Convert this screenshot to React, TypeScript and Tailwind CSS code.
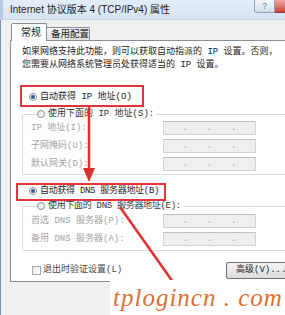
import React from "react";

const body = { fontFamily: '"Liberation Mono", "Noto Sans CJK SC", monospace' };
const ui = { fontFamily: '"Liberation Sans", "Noto Sans CJK SC", sans-serif' };

function Radio({ on }: { on?: boolean }) {
  return (
    <span className="w-[8px] h-[8px] rounded-full border border-[#8e8f8f] bg-gradient-to-br from-[#e6e6e6] to-white flex items-center justify-center shrink-0">
      {on && <span className="w-[4px] h-[4px] rounded-full bg-[#2f5f95]" />}
    </span>
  );
}

function IpBox() {
  return (
    <div className="w-[93px] h-[14px] bg-[#efefef] border border-[#d2d2d2] border-t-[#bdbdbd] flex items-center text-[#9a9a9a] text-[9px] leading-none">
      <span className="flex-1" />
      <span>.</span>
      <span className="flex-1" />
      <span>.</span>
      <span className="flex-1" />
      <span>.</span>
      <span className="flex-1" />
    </div>
  );
}

function FieldRow({ label }: { label: string }) {
  return (
    <div className="flex items-center h-[14px]">
      <span className="w-[132px] text-[#a3a3a3]">{label}</span>
      <IpBox />
    </div>
  );
}

export default function App() {
  return (
    <div className="relative w-[285px] h-[315px] overflow-hidden flex flex-col bg-[#f0f0f0]" style={body}>
      {/* title bar */}
      <div className="h-[20px] shrink-0 flex bg-gradient-to-b from-[#e3edf8] to-[#d6e4f3] border-b border-[#c7d3e0]">
        <div className="w-[3px] bg-[#b4cbe6]" />
        <span className="pl-[7px] pt-[3px] text-[10px] leading-[14px] text-[#1e1e1e]" style={ui}>
          Internet 协议版本 4 (TCP/IPv4) 属性
        </span>
        <div className="ml-auto flex self-start">
          <div className="w-[21px] h-[13px] rounded-bl-[3px] border border-t-0 border-[#8fa3ba] bg-gradient-to-b from-[#f4f7fb] to-[#d3dfec] flex items-center justify-center text-[9px] leading-none text-[#6d7f96]" style={ui}>
            ?
          </div>
          <div className="w-[10px] h-[13px] bg-gradient-to-b from-[#e8a8a0] to-[#c9453a] border-b border-[#8a3b35]" />
        </div>
      </div>

      <div className="flex flex-1">
        <div className="w-[4px] bg-[#b4cbe6] border-r border-[#7b93ae]" />
        <div className="flex-1 pl-[9px] pt-[3px]">
          {/* tabs */}
          <div className="flex items-end h-[17px] relative z-10 whitespace-nowrap" style={ui}>
            <div className="ml-[1px] w-[36px] h-[18px] -mb-px bg-white border border-[#898c95] border-b-0 rounded-t-[2px] flex items-center pl-[9px] text-[10px] text-[#1a1a1a]">
              常规
            </div>
            <div className="w-[43px] h-[13px] bg-gradient-to-b from-[#f2f2f2] to-[#e0e0e0] border border-[#898c95] border-b-0 border-l-0 rounded-tr-[2px] flex items-center pl-[4px] text-[9.5px] leading-none text-[#1a1a1a]">
              备用配置
            </div>
          </div>

          {/* panel */}
          <div className="relative w-[300px] h-[242px] bg-white border border-[#898c95] pl-[11px] text-[9px] leading-[12px] text-[#1c1c1c]">
            <p className="mt-[5px] leading-[13px]">
              如果网络支持此功能，则可以获取自动指派的 IP 设置。否则，
              <br />
              您需要从网络系统管理员处获得适当的 IP 设置。
            </p>

            <div className="mt-[19px] h-[12px] flex items-center gap-[3px] pl-[7px]">
              <Radio on />
              <span>自动获得 IP 地址(O)</span>
            </div>

            <fieldset className="mt-[5px] w-[265px] border border-[#d5dde3] rounded-[2px] pl-[8px] pb-[3px]">
              <legend className="h-[12px] flex items-center gap-[3px] ml-[6px] pr-[2px] bg-white text-[#333]">
                <Radio />
                <span>使用下面的 IP 地址(S):</span>
              </legend>
              <div className="flex flex-col gap-[4px] pt-[1px]">
                <FieldRow label="IP 地址(I):" />
                <FieldRow label="子网掩码(U):" />
                <FieldRow label="默认网关(D):" />
              </div>
            </fieldset>

            <div className="mt-[10px] h-[12px] flex items-center gap-[3px] pl-[7px]">
              <Radio on />
              <span className="tracking-[-0.3px]">自动获得 DNS 服务器地址(B)</span>
            </div>

            <fieldset className="mt-[3px] w-[265px] border border-[#d5dde3] rounded-[2px] pl-[8px] pb-[4px]">
              <legend className="h-[12px] flex items-center gap-[3px] ml-[6px] pr-[2px] bg-white text-[#333]">
                <Radio />
                <span className="tracking-[-0.3px]">使用下面的 DNS 服务器地址(E):</span>
              </legend>
              <div className="flex flex-col gap-[4px] pt-[2px]">
                <FieldRow label="首选 DNS 服务器(P):" />
                <FieldRow label="备用 DNS 服务器(A):" />
              </div>
            </fieldset>

            <div className="mt-[13px] flex items-center h-[12px] pl-[10px]">
              <span className="w-[9px] h-[9px] border border-[#a8a8a8] bg-gradient-to-br from-[#e4e4e4] to-white mr-[2px]" />
              <span className="text-[#444]">退出时验证设置(L)</span>
              <div className="ml-[104px] w-[70px] h-[17px] border border-[#707070] rounded-[2px] bg-gradient-to-b from-[#f3f3f3] to-[#dcdcdc] flex items-center justify-center text-[#1c1c1c]">
                高级(V)...
              </div>
            </div>

            {/* annotations */}
            <div className="absolute left-[9px] top-[44px] w-[124px] h-[22px] border-2 border-[#e0333a]" />
            <div className="absolute left-[5px] top-[142px] w-[150px] h-[18px] border-2 border-[#e0333a]" />
          </div>
        </div>
      </div>

      <svg className="absolute inset-0 pointer-events-none" width="285" height="315" viewBox="0 0 285 315">
        <line x1="89" y1="107" x2="89" y2="172" stroke="#e0302e" strokeWidth="2.5" />
        <polygon points="83,168 95,168 89,182" fill="#e0302e" />
        <line x1="120" y1="207" x2="180" y2="292" stroke="#e0302e" strokeWidth="2.5" />
      </svg>

      <div className="absolute left-[110px] top-[280px] w-[175px] h-[35px] bg-white flex items-center pl-[3px]">
        <span className="italic text-[25px] leading-none text-[#dd7038] tracking-[1px]" style={{ fontFamily: '"Liberation Serif", serif' }}>
          tplogincn . com
        </span>
      </div>
    </div>
  );
}
